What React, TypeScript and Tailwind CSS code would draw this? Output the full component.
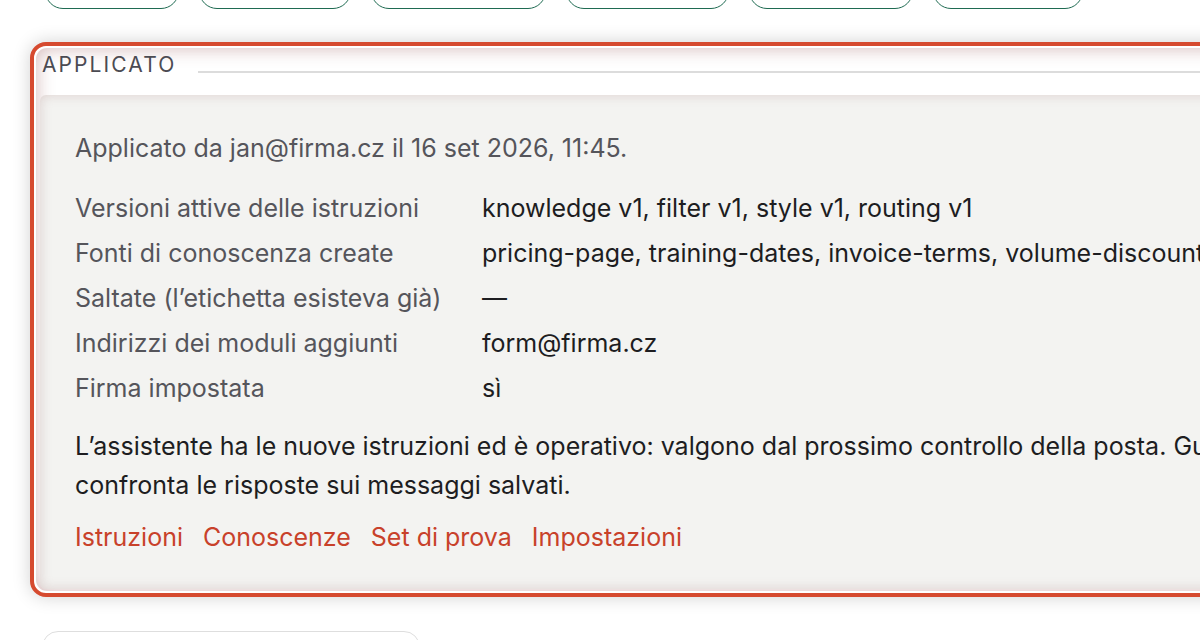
const pills = [134, 152, 175, 163, 164, 150];

const rows: [string, string][] = [
  ["Versioni attive delle istruzioni", "knowledge v1, filter v1, style v1, routing v1"],
  ["Fonti di conoscenza create", "pricing-page, training-dates, invoice-terms, volume-discounts"],
  ["Saltate (l’etichetta esisteva già)", "—"],
  ["Indirizzi dei moduli aggiunti", "form@firma.cz"],
  ["Firma impostata", "sì"],
];

const links = ["Istruzioni", "Conoscenze", "Set di prova", "Impostazioni"];

export default function App() {
  return (
    <div
      className="w-[1200px] h-[640px] overflow-hidden bg-white"
      style={{ fontFamily: "Inter, 'Noto Sans', sans-serif" }}
    >
      <div className="flex gap-[20px] pl-[45px] mt-[-30px]">
        {pills.map((w, i) => (
          <div
            key={i}
            className="h-[39px] rounded-[18px] border-[1.5px] border-[#1f6b52] bg-white"
            style={{ width: w }}
          />
        ))}
      </div>

      <div className="ml-[30px] mt-[33px] w-[1260px] rounded-[16px] border-[4px] border-[#d64a2f] bg-white p-[2px] shadow-[0_0_18px_rgba(0,0,0,0.18)]">
        <div className="rounded-[11px] px-[4px] pt-[5px] pb-[2px] shadow-[inset_0_0_18px_rgba(150,80,80,0.42)]">
          <div className="flex items-end gap-[22px] h-[24px]">
            <span className="text-[21px] leading-[24px] tracking-[0.1em] text-[#4b4b52] pl-[2px]">APPLICATO</span>
            <div className="flex-1 h-[2px] bg-[#dcdcdc] mb-[4px]" />
          </div>
          <div className="mt-[18px] bg-[#f3f3f1] rounded-[6px] pl-[35px] pt-[35px] pb-[34px] text-[25px] shadow-[inset_0_0_12px_rgba(140,80,80,0.22)]">
            <div className="leading-[36px] text-[#55555b]">
              Applicato da jan@firma.cz il 16 set 2026, 11:45.
            </div>
            <div className="mt-[20px]">
              {rows.map(([k, v]) => (
                <div key={k} className="flex leading-[45px] whitespace-nowrap">
                  <div className="w-[407px] shrink-0 text-[#55555b]">{k}</div>
                  <div className="text-[#1d1d21]">{v}</div>
                </div>
              ))}
            </div>
            <p className="mt-[16px] leading-[39px] text-[#1d1d21] w-[1400px]">
              L’assistente ha le nuove istruzioni ed è operativo: valgono dal prossimo controllo della posta. Guarda il set di prova e confronta le risposte sui messaggi salvati.
            </p>
            <div className="mt-[14px] flex gap-[20px] leading-[36px] text-[#c8412a]">
              {links.map((l) => (
                <a key={l} href="#" onClick={(e) => e.preventDefault()}>
                  {l}
                </a>
              ))}
            </div>
          </div>
        </div>
      </div>

      <div className="ml-[42px] mt-[34px] w-[378px] h-[60px] rounded-[16px] border border-[#dedede] bg-white" />
    </div>
  );
}
